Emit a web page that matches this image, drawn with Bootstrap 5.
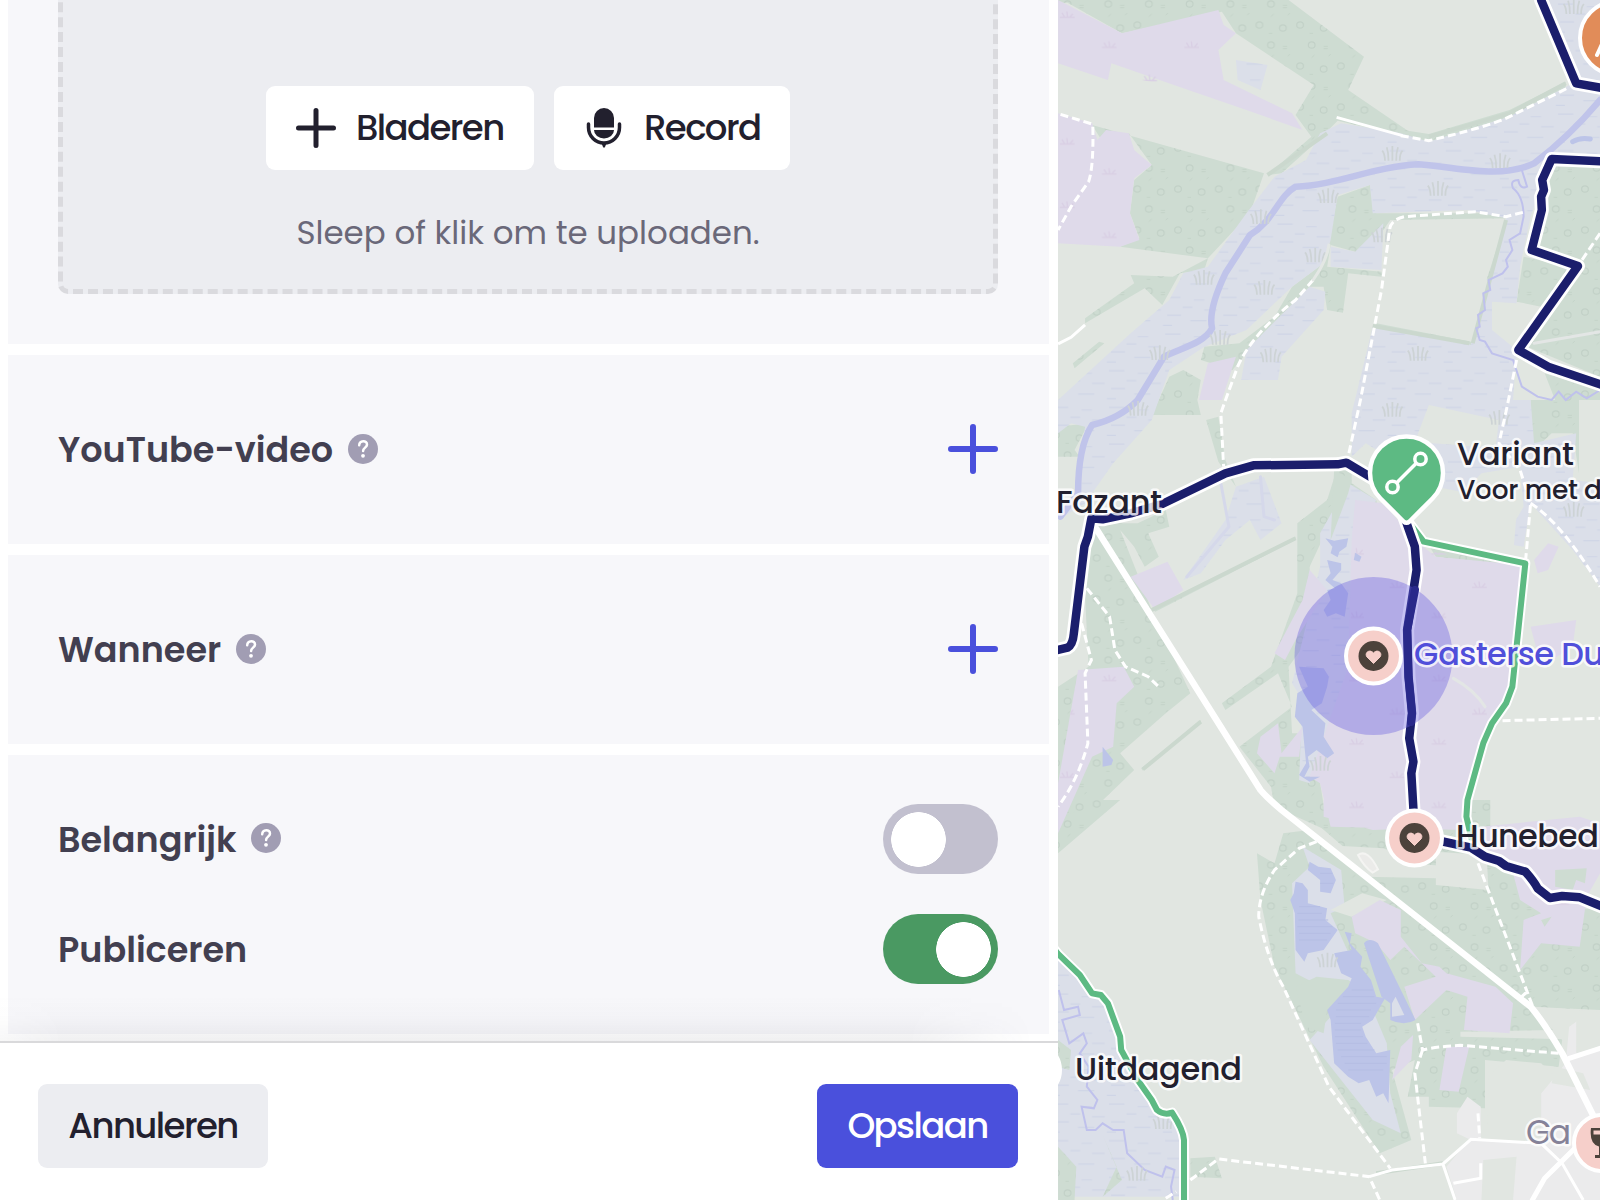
<!DOCTYPE html>
<html lang="nl">
<head>
<meta charset="utf-8">
<meta name="viewport" content="width=device-width, initial-scale=1">
<title>Route bewerken</title>
<link href="https://cdn.jsdelivr.net/npm/bootstrap@5.3.0/dist/css/bootstrap.min.css" rel="stylesheet">
<style>
body{font-family:Poppins,Inter,"Open Sans",sans-serif;color:#22202e;background:#fff;overflow:hidden}
.app-shell{width:1600px;height:1200px}
.edit-panel{width:1058px;background:#fff}
.form-scroll{height:1041px;padding:0 9px 0 8px;gap:11px}
.form-block{background:#f7f7fa;padding:0 51px 0 50px}
.block-upload{height:344px;padding-bottom:50px}
.block-line{height:189px}
.block-toggles{height:279px;padding-top:49px;gap:40px}
.drop-zone{height:400px;border:5px dashed #dadade;border-radius:10px;background:#ecedf1;padding-bottom:36px}
.drop-actions{gap:20px}
.btn-big{height:84px;border-radius:9px;font-size:35.5px;font-weight:500;line-height:1;letter-spacing:-.045em;padding:0 30px;border:0;white-space:nowrap;--bs-btn-color:#22202e}
.btn-browse{width:268px;gap:20px}
.btn-record{width:236px;gap:20px}
.btn-cancel{background:#ecedf1;width:230px}
.btn-save,.btn-save:hover{background:#4a50dc;color:#fff;width:201px}
.drop-hint{font-size:32.5px;line-height:40px;color:#6a6879;margin-top:43px;white-space:nowrap}
.field-title{font-size:35px;line-height:44px;font-weight:600;color:#423f50;white-space:nowrap}
.help-icon{margin:-2px 0 0 15px}
.plus-icon{margin-bottom:2px}
.block-toggles .field-title{padding-top:2px}
.panel-footer{height:159px;border-top:2px solid #d9d9db;padding:41px 40px 0 38px;background:#fff;position:relative}
.panel-footer::before{content:"";position:absolute;left:0;right:25px;top:-47px;height:45px;background:linear-gradient(to bottom,rgba(40,40,60,0),rgba(40,40,60,.02) 50%,rgba(40,40,60,.07));-webkit-mask-image:linear-gradient(to right,rgba(0,0,0,.5),#000 6%,#000 88%,transparent);mask-image:linear-gradient(to right,rgba(0,0,0,.5),#000 6%,#000 88%,transparent)}
.form-check-input.big-switch{width:115px;height:70px;border:0;border-radius:35px;margin:0;background-color:#c2c0cf;background-image:radial-gradient(circle 27.5px at 35.5px 35.5px,#fff 27px,transparent 27.6px);background-position:0 0;background-size:100% 100%}
.form-check-input.big-switch:checked{background-color:#4a9962;background-image:radial-gradient(circle 27.5px at 80.5px 35.5px,#fff 27px,transparent 27.6px);background-position:0 0}
.map-view{width:542px;height:1200px}
.terrain *{vector-effect:non-scaling-stroke}
.tForest{fill:#cedcd2}.tTrees{fill:url(#trees)}
.tHeath{fill:#dfdaea}.tHeathP{fill:url(#tufts)}
.tWet{fill:#dbdfe9}.tWetP{fill:url(#dashes)}
.tLand{fill:#e1e6e1}.tWater{fill:#bcc4e8}.tTown{fill:#ebebec}
.track{fill:none;stroke:#fff;stroke-width:3;stroke-dasharray:8 4}
.lane{fill:none;stroke:#fff;stroke-width:3}
.brook{fill:none;stroke:#bfc1ec;stroke-width:2}
.hedge{fill:none;stroke:#cbd8ce;stroke-width:4}
.ln{fill:none;stroke-linejoin:round;stroke-linecap:round}
.map-label{font-family:Poppins,Inter,"Open Sans",sans-serif;font-size:32px;font-weight:500;fill:#22202e;stroke:#fff;stroke-width:5;stroke-opacity:.8;stroke-linejoin:round;paint-order:stroke}
.map-label.label-sub{font-size:26.5px}
.map-label.label-area{fill:#504fda}
.map-label.label-town{fill:#858298;font-weight:400;font-size:33px}
</style>
<script src="https://cdn.jsdelivr.net/npm/bootstrap@5.3.0/dist/js/bootstrap.bundle.min.js"></script>
</head>
<body>
<div class="app-shell d-flex overflow-hidden">
<main class="edit-panel d-flex flex-column flex-shrink-0">
  <div class="form-scroll d-flex flex-column overflow-hidden">
    <section class="form-block block-upload d-flex flex-column justify-content-end flex-shrink-0 overflow-hidden">
      <div class="drop-zone d-flex flex-column align-items-center justify-content-end flex-shrink-0">
        <div class="drop-actions d-flex">
          <button class="btn btn-big btn-browse bg-white d-flex align-items-center" type="button">
            <svg class="flex-shrink-0" width="40" height="40" viewBox="0 0 40 40" stroke="#22202e" stroke-width="5" stroke-linecap="round"><path d="M20 2.500v35M2.500 20h35"/></svg><span>Bladeren</span></button>
          <button class="btn btn-big btn-record bg-white d-flex align-items-center" type="button">
            <svg class="flex-shrink-0" width="40" height="40" viewBox="0 0 40 40"><path fill="#22202e" d="M10 19.500V10a10 10 0 0 1 20 0v9.500zM10 22h20a10 8.500 0 0 1-20 0z"/><path d="M4.500 16v3.500a15.500 15.500 0 0 0 31 0V16" fill="none" stroke="#22202e" stroke-width="3.500" stroke-linecap="round"/><path d="M17 34h6l-2 5q-1 1.600-2 0z" fill="#22202e"/></svg><span>Record</span></button>
        </div>
        <div class="drop-hint">Sleep of klik om te uploaden.</div>
      </div>
    </section>
    <section class="form-block block-line d-flex align-items-center justify-content-between flex-shrink-0">
      <div class="d-flex align-items-center"><span class="field-title">YouTube-video</span><svg class="help-icon" width="30" height="30"><use href="#help"/></svg></div>
      <svg class="plus-icon" width="50" height="50"><use href="#plus"/></svg>
    </section>
    <section class="form-block block-line d-flex align-items-center justify-content-between flex-shrink-0">
      <div class="d-flex align-items-center"><span class="field-title">Wanneer</span><svg class="help-icon" width="30" height="30"><use href="#help"/></svg></div>
      <svg class="plus-icon" width="50" height="50"><use href="#plus"/></svg>
    </section>
    <section class="form-block block-toggles d-flex flex-column flex-shrink-0">
      <div class="d-flex align-items-center justify-content-between">
        <div class="d-flex align-items-center"><span class="field-title">Belangrijk</span><svg class="help-icon" width="30" height="30"><use href="#help"/></svg></div>
        <input class="form-check-input big-switch" type="checkbox" role="switch" aria-label="Belangrijk">
      </div>
      <div class="d-flex align-items-center justify-content-between">
        <span class="field-title">Publiceren</span>
        <input class="form-check-input big-switch" type="checkbox" role="switch" checked aria-label="Publiceren">
      </div>
    </section>
  </div>
  <footer class="panel-footer d-flex align-items-start justify-content-between flex-shrink-0">
    <button class="btn btn-big btn-cancel" type="button">Annuleren</button>
    <button class="btn btn-big btn-save" type="button">Opslaan</button>
  </footer>
</main>
<svg class="map-view flex-shrink-0" viewBox="1058 0 542 1200">
<defs>
  <symbol id="help" viewBox="0 0 30 30"><circle cx="15" cy="15" r="15" fill="#a19db3"/><path d="M11.200 11.200c.2-5.400 8-5.200 7.800-.6-.1 3-3.900 3.200-3.900 6.400" fill="none" stroke="#fff" stroke-width="2.500" stroke-linecap="round"/><circle cx="15" cy="21.800" r="1.900" fill="#fff"/></symbol>
  <symbol id="plus" viewBox="0 0 50 50"><path d="M25 3v44M3 25h44" stroke="#4a50dc" stroke-width="6" stroke-linecap="round"/></symbol>
  <symbol id="heartpin" viewBox="-30 -30 60 60"><circle r="29.500" fill="#fff"/><circle r="25.500" fill="#f6cfca"/><circle r="15" fill="#4c423b"/><path d="M0 7.500L-6.500 1C-9.500-3-4-7.500 0-3C4-7.500 9.500-3 6.500 1z" fill="#f6cfca" stroke="#f6cfca" stroke-linejoin="round"/></symbol>
  <pattern id="trees" width="116" height="123" patternUnits="userSpaceOnUse"><g fill="none" stroke="#c2d1c7" stroke-width="3.500"><circle cx="50" cy="12" r="9.500"/><circle cx="17" cy="75" r="9.500"/><circle cx="84" cy="84" r="9.500"/><path d="M84 16h12M84 23h12M50 50l8-8M98 46l6-7M44 100h10" stroke-width="2.500"/></g></pattern>
  <pattern id="tufts" width="235" height="190" patternUnits="userSpaceOnUse"><g fill="none" stroke="#d9cfe4" stroke-width="4"><path d="M28 52h42M42 52l-8-14M50 52l-2-18M56 52l10-12"/><path d="M148 142h42M162 142l-8-14M170 142l-2-18M176 142l10-12"/></g></pattern>
  <pattern id="dashes" width="160" height="110" patternUnits="userSpaceOnUse"><g stroke="#cfd5e6" stroke-width="3.500"><path d="M8 12h44M90 20h30M58 42h28M120 50h36M14 66h40M80 82h46M2 96h26"/></g></pattern>
  <g id="reed" fill="none" stroke="#cdd3d5" stroke-width="5"><path d="M-20 22q-1-22-8-30M-10 22q0-24-5-40M1 22v-44M12 22q-1-22 5-40M22 22q0-22 8-30"/></g>
  <path id="f1" d="M23 0H680L895 170L850 270L1020 392L1080 402L1310 330L1470 245V262L1310 350L1080 425L820 362L760 425L660 520L620 525L745 410L700 345L752 255L530 100L490 35L205 100L50 8H23ZM120 375L610 520L570 640L450 775L200 740L255 715L228 640L240 540L290 495L225 400L150 425ZM23 620L50 630L23 690ZM230 825L350 830L450 775L440 810L370 820L320 915L270 865L100 970V955L240 850ZM65 1090L140 1025L155 1030L70 1105ZM820 590L912 555L930 640L1340 640L1300 655L970 660L920 735L870 755L800 735L790 800L945 815V830L850 820L835 938L790 930L780 860L740 860L560 1060L520 1110L430 1080L440 1040L540 1030L640 950L690 860L780 790ZM380 1110L430 1140L420 1200H310L340 1130ZM1430 500H1568V1130L1360 1040L1510 800L1370 740ZM1350 770L1480 800L1400 920L1330 905ZM930 970L1200 1025V1035L930 985ZM1300 660L1245 838L1256 838L1310 660ZM1410 1120L1568 1170V1200H1440Z"/>
  <path id="f2" d="M310 1200H420L430 1245H290ZM1370 1200H1508V1420L1490 1300H1430L1400 1330H1375ZM445 1260L480 1250L500 1380L530 1460L480 1385ZM23 1280L110 1270L70 1350L85 1370L23 1370ZM120 1570L250 1570L330 1530L340 1580L280 1600L310 1670L270 1700L240 1640L200 1590L290 1830L400 2080L330 2140L200 2260L240 2310L23 2530V2060L110 2000L100 1790ZM705 1570L790 1500L820 1400L860 1410V1450L930 1500L940 1540L780 1610L740 1700L750 1900L680 2000L690 2200L740 2200L770 2350L790 2480L1180 2490L1240 2400H1255V2580L1100 2560L1090 2590L930 2600L870 2530L640 2420L630 2360L540 2240L690 2120L650 2020L500 2130L490 2110L630 2000L705 1780ZM290 1825L700 1610V1620L300 1835ZM260 2305L430 2160V2170L265 2312ZM1070 1620L1340 1690L1350 1700L1100 1670Z"/>
  <path id="f3" d="M665 2500L740 2490L830 2560L1000 2630L1100 2610L1240 2670L1200 2470H1250L1250 2590L1330 2610L1568 2850V3030L1370 3020L1460 3120L1450 3200L1240 3180V3325L1080 3320V3290L1020 3290L1040 3180L975 3210L1030 3420L940 3460L780 3200L640 2900L600 2700L590 2560L640 2590ZM790 2400H1240L1160 2600L880 2580L770 2480ZM1250 2510L1270 2620L1360 2710L1568 2730V3030L1370 3020L1240 2620ZM23 2460L140 2400H200L23 2560ZM400 3475L470 3470L490 3535L400 3530ZM23 3440L75 3500L70 3600H23ZM150 3405L205 3540L150 3590L190 3500ZM23 3120L60 3150L55 3210L23 3200Z"/>
  <path id="w1" d="M1400 0H1568V480L1430 465L1370 650L1340 800L1330 910L1260 905V990L1330 1050L1320 1200L1370 1200L1380 1330L1500 1300L1490 1440L1568 1450V1760L1490 1650L1370 1510L1350 1640L1290 1630L1350 1520L1340 1400L1230 1420L1120 1540L1050 1440L1010 1400L900 1330L860 1370L860 1240L920 980L1200 1035L1300 655L1190 630L920 640L912 555L820 585L800 720L780 790L690 860L560 990L440 1040L340 1110L290 1260L180 1390L100 1510L23 1560V1540L70 1480L100 1280L60 1270L23 1300V1200L230 1000L340 900L380 820L450 800L560 640L640 530L730 480L770 400L830 370L1000 400L1080 425L1310 350L1470 262L1500 240ZM800 740L870 755L950 670L945 810L800 800ZM740 860L785 875L780 930L660 1070L650 1140L545 1140L560 1050ZM530 180L620 195L600 270L535 240ZM530 1460L610 1430L660 1570L600 1620L570 1560L500 1620L430 1720L380 1740L500 1560ZM770 1600L850 1450L930 1500L870 1620L850 2000L740 2350L710 2340L720 2100L690 2050L770 1700ZM23 2880L100 2960L165 3005L200 3130L205 3160L290 3290L320 3345L370 3370V3590H23Z"/>
</defs>
<rect x="1058" width="542" height="1200" fill="#e1e6e1"/>
<g class="terrain" transform="translate(1050 0) scale(.3508 .33333)">
  <use href="#f1" class="tForest"/><use href="#f1" class="tTrees"/>
  <use href="#f2" class="tForest"/><use href="#f2" class="tTrees"/>
  <use href="#w1" class="tWet"/><use href="#w1" class="tWetP"/>
  <use href="#f3" class="tForest"/><use href="#f3" class="tTrees"/>
  <path class="tWet" d="M720 2540L830 2610L840 2720L800 2740L860 2880L960 3130L970 3280L1000 3400L920 3360L800 3200L740 3120L800 3050L810 2980L700 2920L690 2650L740 2600Z"/>
  <path class="tForest" d="M700 2960L760 2930L850 2940L890 2970L790 3030L780 3100L730 3080ZM800 1620L810 1410L860 1440L850 1480Z"/>
  <path class="tLand" d="M1080 1215L1280 1260L1270 1345L1040 1325ZM1100 1460L1290 1500L1330 1540L1320 1670L1060 1620L1050 1560ZM1100 2555L1240 2565V2470L1250 2670L1100 2655ZM780 2535L950 2545L1100 2610V2635L900 2630ZM800 2730L890 2680L960 2700L860 2750ZM1380 3020L1568 3035V3120L1170 3110L1170 3095L1440 3090Z"/>
  <path class="tHeath" d="M23 0L205 100L480 30L495 75L530 100L480 150L495 240L690 340L720 390L560 330L380 265L175 190L165 240L23 190ZM23 340L120 370L135 420L160 390L225 400L240 450L290 495L240 535L228 640L255 720L200 740L23 730ZM450 1090L530 1070L490 1200H425ZM230 1730L335 1685L380 1770L300 1830ZM870 1500L950 1510L1040 1620L1100 1670L1345 1695L1320 2060L1240 2190L1190 2400L1180 2490L800 2480L770 2350L740 2330L850 2000L860 1620ZM740 1710L790 1770L700 1920L670 1980L640 1960L720 1800ZM600 2210L650 2170L660 2260L720 2180L710 2270L655 2270L640 2320L590 2260ZM80 2010L210 2000L240 2060L190 2110L180 2240L120 2270L23 2500V2350ZM1420 1630L1450 1640L1420 1710L1390 1720L1380 1680ZM1370 1880L1500 1860L1490 1940L1400 2000ZM780 2400H1180V2480L920 2490L780 2450ZM1100 2540L1230 2480L1510 2450L1568 2470V2620L1530 2690L1510 2840L1400 2830L1340 2910L1350 2760L1400 2740L1340 2700L1320 2620L1220 2560ZM860 2750L940 2700L1000 2730V2810L1060 2890L1110 2900L1130 2920L1270 2960L1320 3010L1310 3100L1180 3090L1190 2990L1130 2970L1040 3060L1010 2960L1100 2930L1010 2840L970 2880L930 2830L870 2800ZM1130 3140H1195L1165 3275L1110 3270ZM1035 3105L1030 3180L975 3240L1000 3140Z"/>
  <path class="tHeathP" d="M23 20L205 110L480 40L480 150L495 240L380 265L165 220L23 190ZM23 340L120 400L225 400L228 720L23 730ZM870 1620L1345 1695L1320 2060L1240 2190L1190 2400L1180 2480L800 2480L850 2000ZM80 2010L200 2010L120 2270L23 2480V2350ZM1340 2600L1540 2500V2690L1510 2840L1400 2830Z"/>
  <path class="tForest" d="M1440 2610L1530 2605L1525 2650L1500 2640L1490 2670L1440 2660ZM1400 2760L1430 2750L1410 2780Z"/>
  <path class="tTown" d="M1568 2950V3600H1160L1130 3500L1170 3450L1200 3420L1400 3430L1400 3280L1430 3240L1470 3190L1480 3080L1500 3065V3160L1568 3140ZM1160 3400V3340L1190 3290L1228 3320V3415L1200 3420Z"/>
  <path class="tLand" d="M1245 3420L1250 3230L1300 3180L1400 3190L1440 3230L1400 3280V3425ZM1235 3480L1330 3470L1320 3600H1230ZM1440 3200L1520 3220L1540 3270L1430 3250Z"/>
  <path d="M878 2565Q905 2545 935 2608L920 2618Q895 2600 878 2565Z" fill="#ebebe9" stroke="#f4f4f2" stroke-width="2"/>
  <path class="hedge" d="M1080 410L1310 340L1470 250M790 400L620 525M1205 1030L1300 660M920 978L1195 1030M290 1830L700 1615M930 3520L1120 3490M265 2308L430 2165"/>
  <!-- lakes and pools -->
  <path class="tWater" d="M785 1615L810 1622L850 1615L845 1640L825 1655L820 1672L800 1660L805 1640ZM790 1680L830 1690L830 1710L805 1740L830 1750L850 1780L840 1850L815 1840L790 1850L780 1830L800 1800L790 1770L812 1765L785 1740L800 1720ZM870 1658L888 1670L882 1685L866 1680ZM710 2000L780 2005L795 2030L790 2060L775 2110L745 2130L785 2170L780 2210L810 2260L790 2275L760 2250L735 2270L740 2300L725 2330L770 2330L740 2345L710 2325L730 2290L720 2180L698 2150L705 2080L735 2060ZM150 2240L180 2280L175 2295L150 2300ZM740 2585L765 2600L800 2605L815 2640L800 2680L770 2675V2640L735 2610ZM700 2645L720 2650L735 2670L735 2710L790 2725L785 2760L820 2790L780 2850L735 2860L725 2885L700 2850L698 2740L685 2700L695 2680ZM840 2795L860 2800L855 2830L890 2870L885 2900L915 2940L930 2990L955 2995L920 3060L890 3080L900 3110L930 3160L970 3150L965 3310L950 3280L930 3290L910 3240L880 3250L850 3230L810 3190L800 3060L790 3030L850 2960L860 2935L830 2920L810 2860L860 2850ZM895 2830Q910 2810 935 2830L1042 3060Q1010 3080 970 3060V3010L945 2990Z"/>
  <path d="M1490 425Q1510 412 1540 417" class="ln" stroke="#bcc4e8" stroke-width="5"/>
  <path class="tWet" d="M985 2990L1010 3045L975 3050L975 3010Z"/>
  <path d="M710 2720h60M705 2740h70M708 2760h85M705 2780h100M710 2800h90M710 2820h80M770 2620h35M770 2650h38M860 2970h60M835 2990h90M820 3010h110M815 3030h100M815 3050h95M812 3070h75M812 3090h75M812 3110h80M815 3130h90M820 3150h105M830 3170h130M840 3190h120M850 3210h100" stroke="#b5bde3" fill="none"/>
  <!-- river and brooks -->
  <path class="ln" d="M1568 300Q1480 410 1380 490C1280 540 1160 500 1050 493C920 500 820 555 700 560C650 590 640 660 570 705L500 820Q450 930 462 985C440 1030 370 1045 325 1070L250 1200Q200 1255 120 1275Q80 1340 80 1480L30 1550" stroke="#c0c4ea" stroke-width="6.500"/>
  <path class="brook" d="M1345 510L1360 560Q1340 570 1335 540Q1310 540 1320 565Q1350 590 1350 650L1340 700L1310 720L1318 750L1300 780L1305 800L1290 820L1250 840L1255 870L1235 880L1240 930L1220 945L1225 980L1215 985L1225 1020L1240 1025L1260 1060L1320 1080L1345 1160L1390 1190L1430 1200L1450 1175L1470 1200L1500 1175L1530 1195L1568 1170M25 2970L40 3030L80 3020L85 3045L35 3060L55 3130L95 3100L105 3130L85 3160L110 3200L105 3260L135 3300L125 3325L90 3320L105 3390L130 3390L150 3370L180 3390L210 3390L220 3460L270 3510L320 3530L330 3500L355 3510L345 3560L350 3600"/>
  <path class="ln" d="M480 1410L510 1580L390 1730M600 1430L610 1550L640 1560" stroke="#d5d8ea" stroke-width="3"/>
  <g><use href="#reed" x="975" y="460"/><use href="#reed" x="1282" y="482"/><use href="#reed" x="1105" y="565"/><use href="#reed" x="792" y="587"/><use href="#reed" x="438" y="832"/><use href="#reed" x="610" y="862"/><use href="#reed" x="484" y="1012"/><use href="#reed" x="1048" y="1060"/><use href="#reed" x="628" y="1065"/><use href="#reed" x="312" y="1058"/><use href="#reed" x="600" y="650"/><use href="#reed" x="945" y="705"/><use href="#reed" x="755" y="765"/><use href="#reed" x="1492" y="20"/><use href="#reed" x="250" y="1225"/><use href="#reed" x="975" y="1228"/><use href="#reed" x="1280" y="1252"/><use href="#reed" x="1492" y="1528"/><use href="#reed" x="790" y="2880"/><use href="#reed" x="247" y="3520"/><use href="#reed" x="322" y="3365"/><use href="#reed" x="770" y="2290"/></g>
  <!-- tracks -->
  <path class="track" d="M30 343L122 373Q125 500 110 545L60 620L23 690M1000 407L1080 422Q1250 380 1310 350L1480 262M1348 637L1300 650L1210 635L1010 650Q970 660 968 690L945 870L885 1200L850 1370M750 840L700 900C600 980 550 1060 535 1100Q500 1200 487 1240L495 1400M1568 700L1510 790M1330 1080L1305 1210L1280 1330L1340 1410L1370 1510L1355 1690M1370 1510Q1460 1570 1568 1760M105 1765L170 1850L185 1950L215 2000L280 2030L310 2060M90 1870L118 1980L100 2020L108 2230Q80 2340 23 2420M1290 2162L1568 2155M760 2525L710 2545L640 2610Q595 2680 595 2750Q620 2880 665 2960L795 3260L970 3505M1220 2590L1380 3030M1048 3070L1062 3150Q1100 3140 1170 3136L1450 3160M1062 3150L1040 3220L1070 3490M400 3540L480 3477L910 3530L940 3600M330 3595L360 3575M1220 3340L1225 3415M1345 2990L1360 2975"/>
  <path class="ln" d="M750 840Q790 780 795 735" stroke="#e3e7e4" stroke-width="3"/>
  <path class="lane" d="M817 352L1005 407M23 1032L60 1012L100 975M910 3530L975 3510L1120 3492L1200 3418L1400 3430L1460 3490L1520 3600M1120 3492L1155 3600M1150 3550L1228 3535V3490"/>
  <path class="ln" d="M1380 1030L1568 995M1150 2035Q1210 2070 1240 2120" stroke="#e3e6e5" stroke-width="3"/>
  <path class="ln" d="M125 1575L600 2370Q620 2395 660 2430L1370 3020Q1410 3070 1460 3160L1550 3350" stroke="#fff" stroke-width="6.500"/>
  <path class="ln" d="M1480 3175L1568 3145M1375 3600L1410 3535L1568 3370" stroke="#fff" stroke-width="5"/>
  <!-- walking routes: white casing below the coloured line -->
  <path class="ln" d="M1018 1560L1065 1625L1355 1690L1318 2060L1300 2110L1260 2170L1235 2230L1190 2400L1187 2450L1200 2510L1210 2550M10 2845L23 2862L85 2925L120 2980L145 2985L165 3010L200 3110L203 3150L250 3240L290 3300L305 3330Q325 3347 348 3338Q380 3390 382 3420V3610" stroke="#fff" stroke-width="10"/>
  <path class="ln" d="M1018 1560L1065 1625L1355 1690L1318 2060L1300 2110L1260 2170L1235 2230L1190 2400L1187 2450L1200 2510L1210 2550M10 2845L23 2862L85 2925L120 2980L145 2985L165 3010L200 3110L203 3150L250 3240L290 3300L305 3330Q325 3347 348 3338Q380 3390 382 3420V3610" stroke="#5dba83" stroke-width="6"/>
  <path class="ln" d="M1400 0L1500 250L1580 265M1580 484L1430 477L1403 540L1408 570L1400 590L1402 630L1373 750L1505 798L1335 1050L1420 1100L1580 1157M10 1953L50 1943Q65 1935 68 1900L98 1640L108 1610L118 1555L150 1558L230 1540L320 1512L500 1420L580 1396L820 1393L845 1388L920 1435M1010 1550L1040 1640L1045 1710L1018 1890L1022 2030L1032 2140L1024 2215L1036 2285L1030 2320L1040 2500M1100 2520L1200 2543L1240 2570L1280 2583L1300 2598L1355 2615Q1380 2645 1390 2665L1425 2694L1460 2688L1510 2692L1580 2722" stroke="#fff" stroke-width="14"/>
  <path class="ln" d="M1400 0L1500 250L1580 265M1580 484L1430 477L1403 540L1408 570L1400 590L1402 630L1373 750L1505 798L1335 1050L1420 1100L1580 1157M10 1953L50 1943Q65 1935 68 1900L98 1640L108 1610L118 1555L150 1558L230 1540L320 1512L500 1420L580 1396L820 1393L845 1388L920 1435M1010 1550L1040 1640L1045 1710L1018 1890L1022 2030L1032 2140L1024 2215L1036 2285L1030 2320L1040 2500M1100 2520L1200 2543L1240 2570L1280 2583L1300 2598L1355 2615Q1380 2645 1390 2665L1425 2694L1460 2688L1510 2692L1580 2722" stroke="#1b1e6c" stroke-width="8.500"/>
</g>
<circle cx="1373.500" cy="656" r="79" fill="#6a5fe0" fill-opacity=".38"/>
<path class="ln" d="M1415 590L1407.200 630L1408.500 677L1412 713L1411 722" stroke="#29298a" stroke-width="8"/>
<g class="labels">
  <text class="map-label" x="1056" y="513" textLength="106">Fazant</text>
  <text class="map-label" x="1457" y="465" textLength="117">Variant</text>
  <text class="map-label label-sub" x="1457" y="499" textLength="145">Voor met d</text>
  <text class="map-label label-area" x="1414" y="665" textLength="190">Gasterse Du</text>
  <text class="map-label" x="1456" y="847" textLength="143">Hunebed</text>
  <text class="map-label" x="1075" y="1080" textLength="167">Uitdagend</text>
  <text class="map-label label-town" x="1526" y="1144" textLength="45">Ga</text>
</g>
<path d="M1409.500 521.500Q1406.500 524 1403.500 521.500L1380.500 498.500A36.500 36.500 0 1 1 1432.500 498.500Z" fill="#5dba83" stroke="#fff" stroke-width="4.500" stroke-linejoin="round"/>
<g fill="none" stroke="#fff" stroke-width="3.500"><circle cx="1420.500" cy="459" r="5.700"/><circle cx="1392.500" cy="487" r="5.700"/><path d="M1416.500 463L1396.500 483"/></g>
<use href="#heartpin" x="1343.500" y="626" width="60" height="60"/>
<use href="#heartpin" x="1384.500" y="808" width="60" height="60"/>
<circle cx="1033" cy="1070" r="27" fill="#f6cfca" stroke="#fff" stroke-width="4"/>
<circle cx="1602" cy="1143" r="28" fill="#f6cfca" stroke="#fff" stroke-width="4"/>
<path d="M1591 1128h22q2 16-8 18.500v8.500h4v3h-14v-3h4v-8.500q-10-2.500-8-18.500z" fill="#4c423b"/><path d="M1593.500 1130.500h17v4h-17z" fill="#f6cfca"/>
<circle cx="1616.500" cy="38" r="36.500" fill="#e18c59" stroke="#fff" stroke-width="4"/>
<path d="M1597 55l6-13" stroke="#fff" stroke-width="4" stroke-linecap="round"/>
</svg>
</div>
</body>
</html>
